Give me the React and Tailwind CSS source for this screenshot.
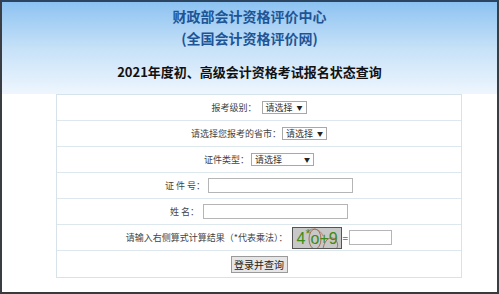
import React from "react";

const cjk = { fontFamily: '"Noto Sans CJK SC", "Noto Sans", sans-serif' };

function Select({ width }) {
  return (
    <div
      className="flex items-center justify-between h-[13px] border border-[#a8a8a8] bg-white pl-[3px] pr-[3px] text-[9px] leading-none text-[#333]"
      style={{ width }}
    >
      <span>请选择</span>
      <span className="text-[6px] text-[#222]">▼</span>
    </div>
  );
}

function Row({ children, last }) {
  return (
    <div
      className={
        "flex h-[26px] items-center justify-center " +
        (last ? "" : "border-b border-[#dde7ee]")
      }
    >
      {children}
    </div>
  );
}

function Captcha() {
  return (
    <div className="relative h-[22px] w-[50px] border border-[#555] bg-[#c8c8c8] overflow-hidden">
      <div
        className="absolute left-[4px] top-[1px] flex items-end text-[16px] leading-[20px] text-[#3d8c14]"
        style={{ fontFamily: '"Liberation Sans", Arial, sans-serif' }}
      >
        <span>4</span>
        <span className="text-[13px] leading-[10px] self-start">*</span>
        <span>o</span>
        <span>+</span>
        <span>9</span>
      </div>
      <svg className="absolute inset-0" width="50" height="22" viewBox="0 0 50 22">
        <ellipse cx="22" cy="11" rx="6" ry="10" fill="none" stroke="#9c5a3c" strokeWidth="0.8" />
        <path d="M30 22 C31 10 40 6 44 14 C46 19 43 22 40 22" fill="none" stroke="#9c5a3c" strokeWidth="0.8" />
        <path d="M14 4 C20 -2 28 2 30 8" fill="none" stroke="#a86e50" strokeWidth="0.7" />
      </svg>
    </div>
  );
}

export default function App() {
  return (
    <div
      className="w-[499px] h-[294px] overflow-hidden bg-white border-t-2 border-t-[#2b4561] border-x-2 border-x-[#3a3d42] border-b-2 border-b-[#3a3a3a]"
      style={cjk}
    >
      <div className="h-[92px] bg-gradient-to-b from-[#8cc2f1] via-[#c6e1f8] to-[#eef6fd] pt-[3px] text-center">
        <div className="text-[14px] leading-[22px] font-bold text-[#1e5596]">财政部会计资格评价中心</div>
        <div className="text-[14px] leading-[22px] font-bold text-[#1e5596]">(全国会计资格评价网)</div>
        <div className="mt-[13px] text-[13px] leading-[20px] font-bold text-[#111]">
          2021年度初、高级会计资格考试报名状态查询
        </div>
      </div>

      <div className="ml-[54px] w-[406px] border border-[#d6e3ea] text-[9px] text-[#444]">
        <Row>
          <span className="mr-[5px]">报考级别：</span>
          <Select width={45} />
        </Row>
        <Row>
          <span className="mr-[1px]">请选择您报考的省市：</span>
          <Select width={45} />
        </Row>
        <Row>
          <span className="mr-[2px]">证件类型：</span>
          <Select width={63} />
        </Row>
        <Row>
          <span className="mr-[3px]">证 件 号：</span>
          <div className="h-[15px] w-[145px] border border-[#b5b5b5] bg-white" />
        </Row>
        <Row>
          <span className="mr-[4px]">姓 名：</span>
          <div className="h-[15px] w-[145px] border border-[#b5b5b5] bg-white" />
        </Row>
        <Row>
          <span className="mr-[4px]">请输入右侧算式计算结果（*代表乘法）：</span>
          <Captcha />
          <span className="mx-[1px] text-[#3d8c14] text-[10px]">=</span>
          <div className="h-[15px] w-[43px] border border-[#b5b5b5] bg-white" />
        </Row>
        <Row last>
          <div className="flex h-[17px] w-[57px] items-center justify-center border border-[#9a9a9a] bg-[#e6e6e6] text-[10px] text-[#222]">
            登录并查询
          </div>
        </Row>
      </div>
    </div>
  );
}
